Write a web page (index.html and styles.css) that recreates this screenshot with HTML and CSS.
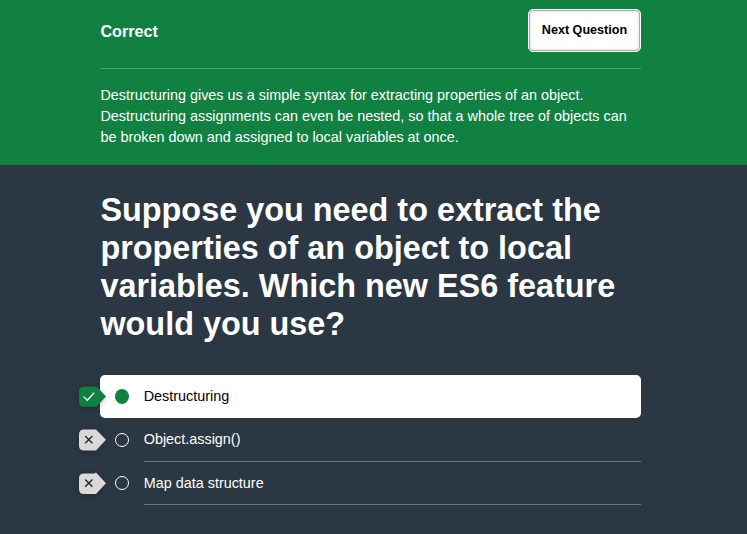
FILE: index.html
```html
<!DOCTYPE html>
<html lang="en">
<head>
<meta charset="utf-8">
<title>Quiz</title>
<link rel="stylesheet" href="styles.css">
</head>
<body>
<section class="feedback">
  <div class="column">
    <header class="feedback-head">
      <h2 class="result">Correct</h2>
      <button class="next" type="button">Next Question</button>
    </header>
    <p class="explanation">Destructuring gives us a simple syntax for extracting properties of an object. Destructuring assignments can even be nested, so that a whole tree of objects can be broken down and assigned to local variables at once.</p>
  </div>
</section>
<main class="column question">
  <h1 class="prompt">Suppose you need to extract the properties of an object to local variables. Which new ES6 feature would you use?</h1>
  <ul class="answers">
    <li class="answer chosen">
      <svg class="tag tag-right" viewBox="0 0 28 22"><path class="shape" d="M5 .8H15.500L17 0 27 10.500 17.500 20.800H5Q0 20.800 0 15.800V5.800Q0 .8 5 .8Z"/><path class="mark" d="M4.600 10.600 8.300 14.200 15.200 6.700"/></svg>
      <span class="radio"></span><span class="label">Destructuring</span>
    </li>
    <li class="answer">
      <svg class="tag" viewBox="0 0 28 22"><path class="shape" d="M5 .5H17L27 10.800 17 21.500H5Q0 21.500 0 16.500V5.500Q0 .5 5 .5Z"/><path class="mark" d="M6.200 7 13.400 14.200M13.400 7 6.200 14.200"/></svg>
      <span class="radio"></span><span class="label">Object.assign()</span>
    </li>
    <li class="answer">
      <svg class="tag" viewBox="0 0 28 22"><path class="shape" d="M5 .5H15.500L17-.5 27 10.200 17 21H5Q0 21 0 16V5.500Q0 .5 5 .5Z"/><path class="mark" d="M6.200 6.500 13.400 13.700M13.400 6.500 6.200 13.700"/></svg>
      <span class="radio"></span><span class="label">Map data structure</span>
    </li>
  </ul>
</main>
</body>
</html>
```
FILE: styles.css
```css
* { box-sizing: border-box; }
body {
  margin: 0;
  background: #2b3742;
  color: #fff;
  font: 14.4px/21px "Liberation Sans", Arial, sans-serif;
  overflow: hidden;
}
.column { width: 541px; margin-left: 100px; }
.feedback { height: 165px; background: #118141; }
.feedback-head {
  display: flex;
  align-items: center;
  justify-content: space-between;
  height: 69px;
  padding: 9px 0 16px;
  border-bottom: 1px solid #479d6b;
}
.result { margin: 1px 0 0 .4px; font-size: 16.2px; line-height: 22px; }
.next {
  width: 113px;
  height: 43px;
  padding: 0 0 2px;
  border: 1px solid #fff;
  border-radius: 5px;
  background: #fff;
  color: #000;
  font: bold 12.6px "Liberation Sans", Arial, sans-serif;
  box-shadow: inset 0 0 0 1px #aaa, inset 0 0 5px #ccc;
}
.explanation { margin: 16px 0 0 .4px; }
.question { padding-top: 26px; }
.prompt { margin: 0 0 32px .4px; font-size: 32.4px; line-height: 38px; }
.answers { margin: 0; padding: 0; list-style: none; }
.answer { position: relative; display: flex; align-items: center; height: 43.500px; padding-left: 15px; }
.chosen { height: 43px; border-radius: 5px; background: #fff; color: #000; }
.radio { width: 14px; height: 14px; margin-right: 14.700px; border: 1px solid #fff; border-radius: 50%; }
.chosen .radio { height: 15px; border: 0; background: #118141; }
.label { flex: 1; align-self: stretch; line-height: 43px; border-bottom: 1px solid #6b727a; }
.chosen .label { border: 0; }
.tag {
  position: absolute;
  left: -21px;
  top: 11px;
  width: 28px;
  height: 22px;
  overflow: visible;
  filter: drop-shadow(0 1px 3px rgba(0, 0, 0, .25));
}
.shape { fill: #d9d9d9; }
.tag-right .shape { fill: #118141; }
.mark { fill: none; stroke: #222; stroke-width: 1.300; }
.tag-right .mark { stroke: #fff; }
```
